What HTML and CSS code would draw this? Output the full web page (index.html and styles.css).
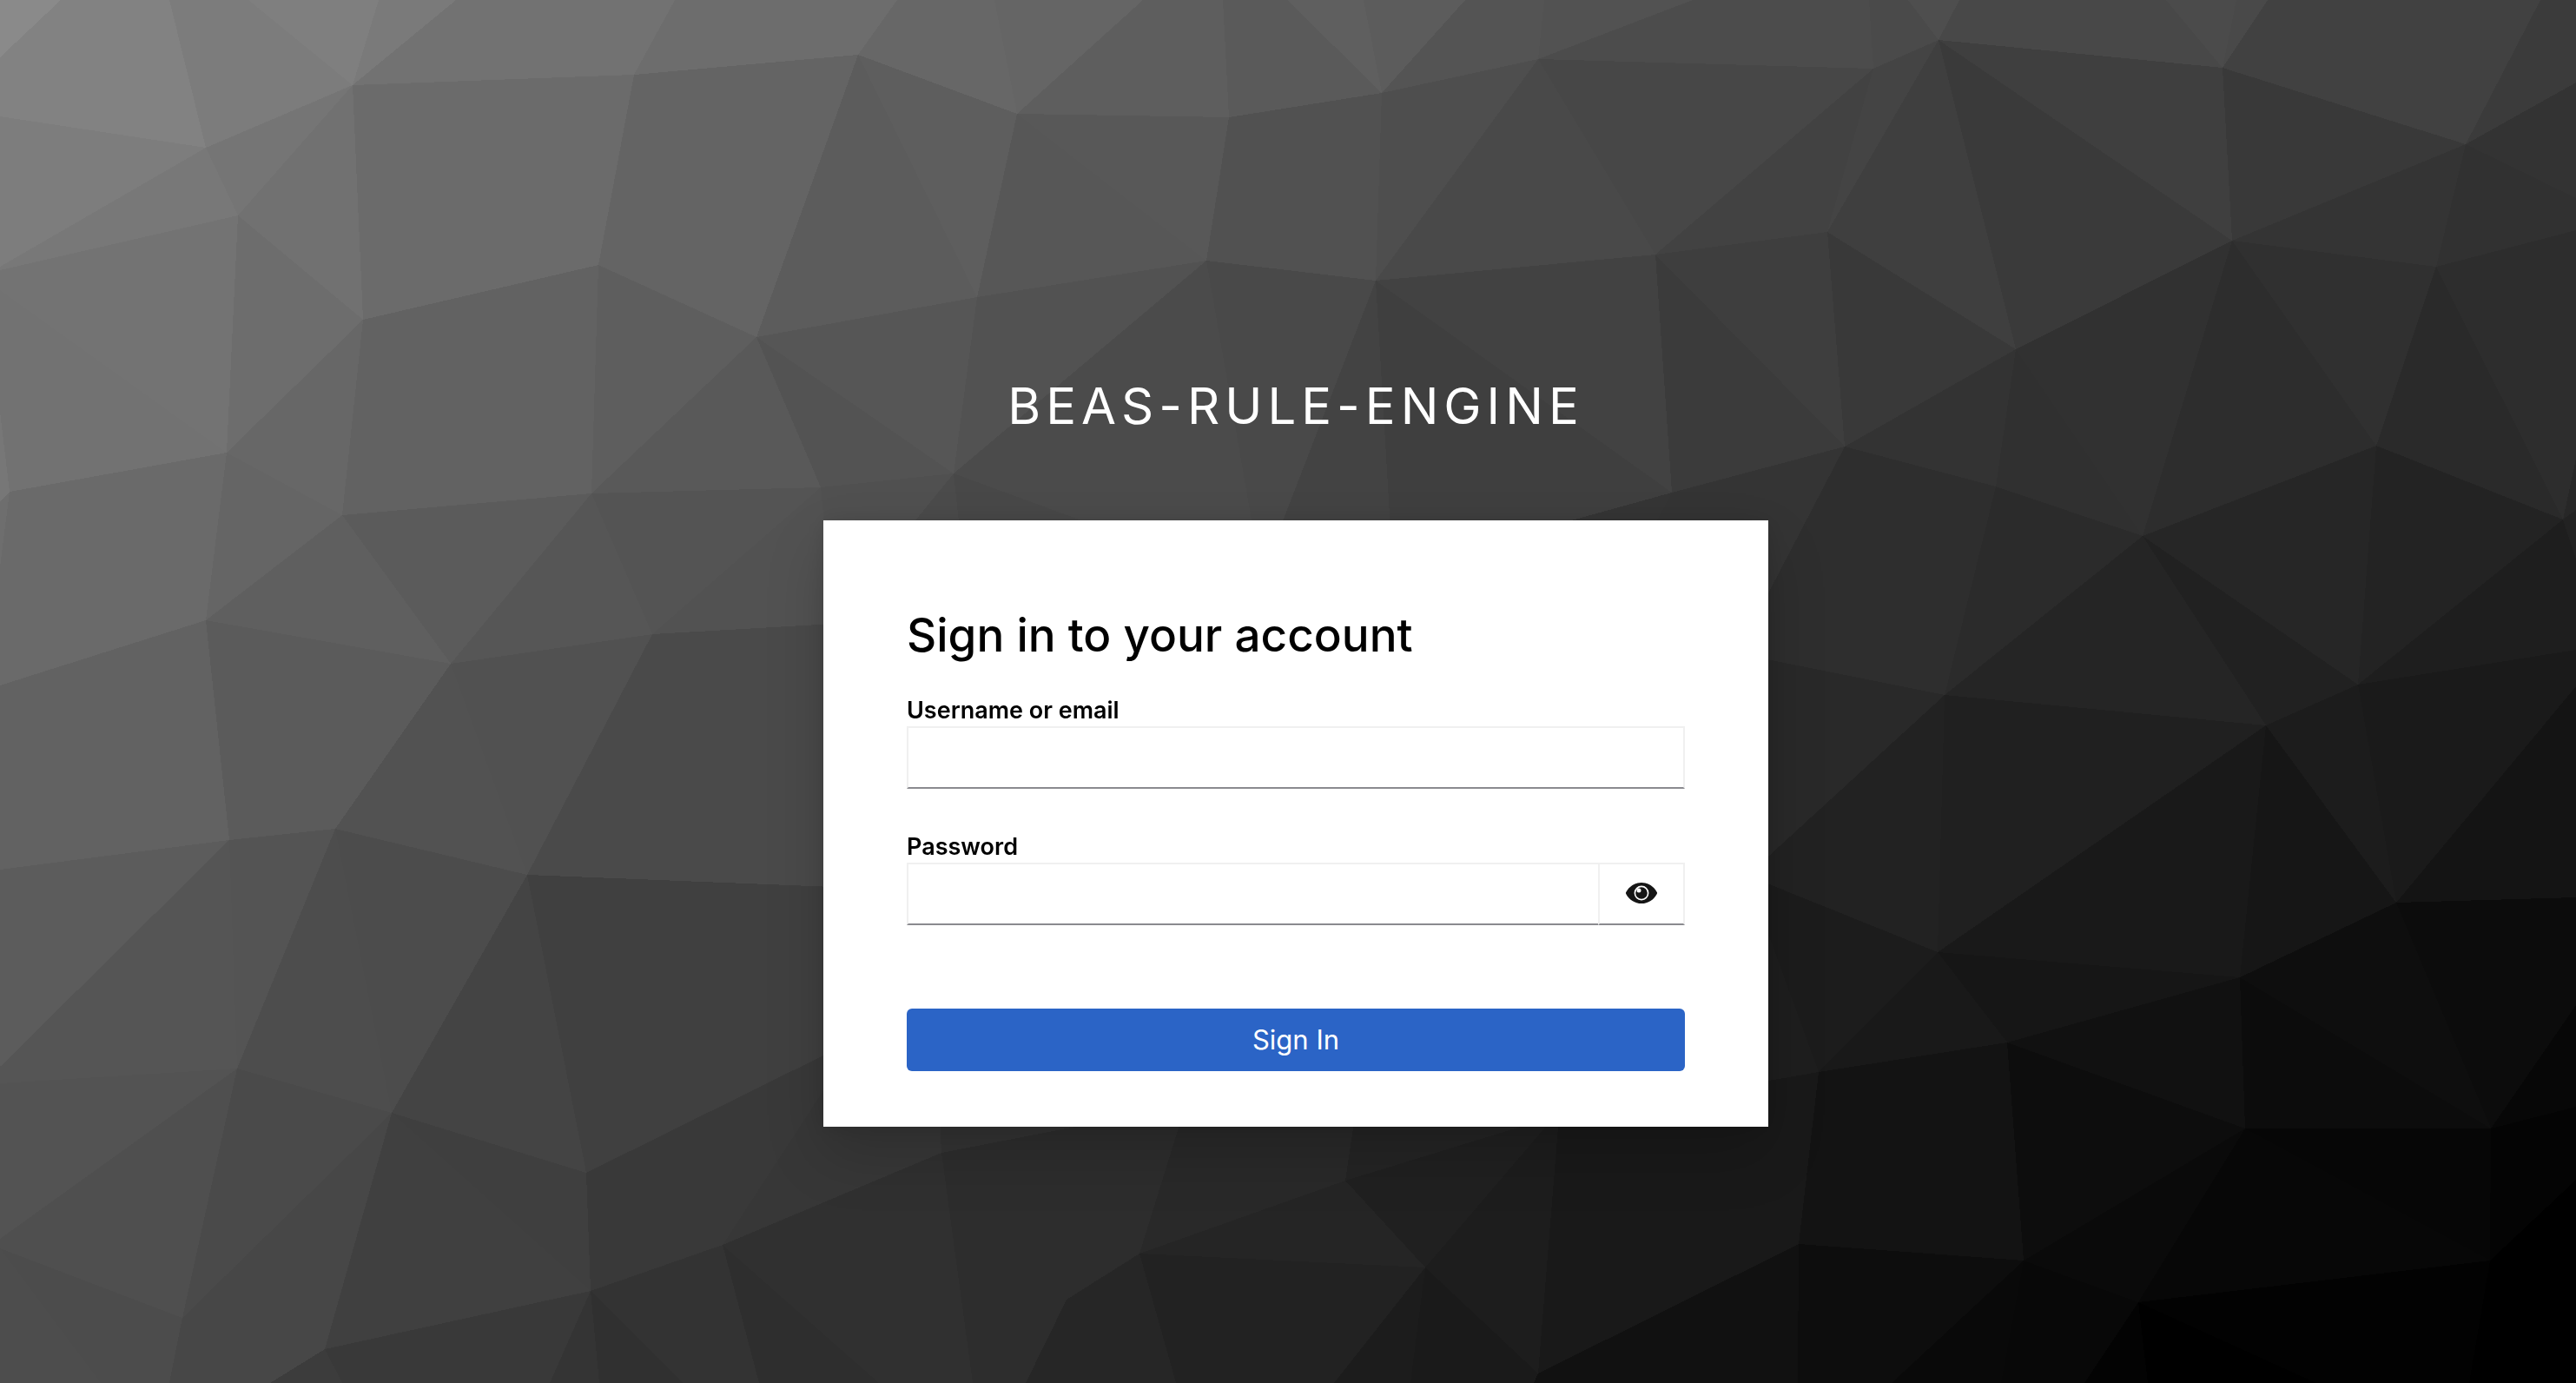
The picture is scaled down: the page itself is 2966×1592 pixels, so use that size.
FILE: index.html
```html
<!DOCTYPE html>
<html lang="en">
<head>
<meta charset="utf-8">
<meta name="viewport" content="width=device-width, initial-scale=1">
<title>Sign in to BEAS-RULE-ENGINE</title>
<link rel="stylesheet" href="styles.css">
</head>
<body>
<svg class="backdrop" viewBox="0 0 2966 1592" preserveAspectRatio="xMidYMid slice" shape-rendering="crispEdges" aria-hidden="true">
<!-- left side, upper part -->
<polygon fill="#8a8a8a" points="0,0 70,0 0,66"/>
<polygon fill="#828282" points="70,0 195,0 237,170 0,134 0,66"/>
<polygon fill="#7c7c7c" points="195,0 286,0 406,98 237,170"/>
<polygon fill="#7f7f7f" points="286,0 436,0 406,98"/>
<polygon fill="#7a7a7a" points="436,0 525,0 406,98"/>
<polygon fill="#727272" points="525,0 777,0 730,86 406,98"/>
<polygon fill="#6d6d6d" points="777,0 1033,0 988,63 730,86"/>
<polygon fill="#6b6b6b" points="406,98 730,86 689,305 418,368"/>
<polygon fill="#646464" points="730,86 988,63 871,388 689,305"/>
<polygon fill="#757575" points="237,170 406,98 274,248"/>
<polygon fill="#717171" points="406,98 274,248 418,368"/>
<polygon fill="#7d7d7d" points="0,134 237,170 0,307"/>
<polygon fill="#787878" points="0,307 237,170 274,248 0,311"/>
<polygon fill="#737373" points="0,311 274,248 261,521 0,334"/>
<polygon fill="#727272" points="0,334 261,521 11,566 0,474"/>
<polygon fill="#777777" points="0,474 11,566 0,577"/>
<polygon fill="#6e6e6e" points="0,577 11,566 0,653"/>
<polygon fill="#6d6d6d" points="274,248 418,368 261,521"/>
<polygon fill="#676767" points="418,368 261,521 394,593"/>
<polygon fill="#626262" points="418,368 689,305 681,568 394,593"/>
<polygon fill="#5e5e5e" points="689,305 871,388 681,568"/>
<polygon fill="#595959" points="871,388 681,568 945,561"/>
<polygon fill="#656565" points="261,521 394,593 237,714"/>
<polygon fill="#6a6a6a" points="11,566 261,521 237,714 0,789 0,653"/>
<polygon fill="#5f5f5f" points="394,593 237,714 519,764"/>
<polygon fill="#5b5b5b" points="394,593 681,568 519,764"/>
<polygon fill="#565656" points="681,568 519,764 751,730"/>
<polygon fill="#545454" points="681,568 945,561 751,730"/>
<polygon fill="#525252" points="945,561 751,730 960,718"/>
<!-- left side, lower part -->
<polygon fill="#626262" points="0,789 237,714 264,967 0,1001"/>
<polygon fill="#5b5b5b" points="237,714 519,764 386,954 264,967"/>
<polygon fill="#525252" points="519,764 386,954 607,1007"/>
<polygon fill="#515151" points="519,764 751,730 607,1007"/>
<polygon fill="#4a4a4a" points="751,730 960,718 960,1021 607,1007"/>
<polygon fill="#5c5c5c" points="0,1001 264,967 0,1228"/>
<polygon fill="#555555" points="264,967 273,1230 0,1247 0,1228"/>
<polygon fill="#545454" points="264,967 386,954 273,1230"/>
<polygon fill="#4d4d4d" points="386,954 273,1230 451,1281"/>
<polygon fill="#4c4c4c" points="386,954 607,1007 451,1281"/>
<polygon fill="#444444" points="607,1007 451,1281 675,1350"/>
<polygon fill="#404040" points="607,1007 960,1021 960,1209 675,1350"/>
<polygon fill="#535353" points="0,1247 273,1230 0,1426"/>
<polygon fill="#4f4f4f" points="0,1426 273,1230 210,1517 0,1437"/>
<polygon fill="#4a4a4a" points="273,1230 451,1281 210,1517"/>
<polygon fill="#474747" points="451,1281 210,1517 374,1553"/>
<polygon fill="#404040" points="451,1281 680,1486 374,1553"/>
<polygon fill="#3f3f3f" points="451,1281 675,1350 680,1486"/>
<polygon fill="#4c4c4c" points="0,1437 210,1517 195,1592 116,1592"/>
<polygon fill="#4d4d4d" points="0,1437 116,1592 0,1592"/>
<polygon fill="#474747" points="210,1517 374,1553 311,1592 195,1592"/>
<polygon fill="#3c3c3c" points="374,1553 311,1592 394,1592"/>
<polygon fill="#393939" points="374,1553 680,1486 633,1592 394,1592"/>
<polygon fill="#343434" points="680,1486 633,1592 690,1592"/>
<polygon fill="#303030" points="680,1486 690,1592 786,1592"/>
<polygon fill="#333333" points="680,1486 832,1433 874,1592 786,1592"/>
<polygon fill="#393939" points="675,1350 960,1209 960,1237 832,1433 680,1486"/>
<!-- top centre -->
<polygon fill="#676767" points="1033,0 1145,0 1171,131 988,63"/>
<polygon fill="#656565" points="1145,0 1316,0 1171,131"/>
<polygon fill="#5e5e5e" points="1316,0 1408,0 1415,135 1171,131"/>
<polygon fill="#5a5a5a" points="1408,0 1482,0 1591,107 1415,135"/>
<polygon fill="#5f5f5f" points="1482,0 1570,0 1591,107"/>
<polygon fill="#5c5c5c" points="1570,0 1687,0 1591,107"/>
<polygon fill="#545454" points="1687,0 1778,0 1771,68 1591,107"/>
<polygon fill="#525252" points="1778,0 1949,0 1771,68"/>
<polygon fill="#4c4c4c" points="1949,0 2152,0 2157,79 1771,68"/>
<polygon fill="#5e5e5e" points="988,63 1171,131 1125,342"/>
<polygon fill="#5c5c5c" points="988,63 1125,342 871,388"/>
<polygon fill="#575757" points="1171,131 1389,300 1125,342"/>
<polygon fill="#585858" points="1171,131 1415,135 1389,300"/>
<polygon fill="#515151" points="1415,135 1591,107 1584,323 1389,300"/>
<polygon fill="#4e4e4e" points="1591,107 1771,68 1584,323"/>
<polygon fill="#494949" points="1771,68 1906,293 1584,323"/>
<polygon fill="#474747" points="1771,68 2157,79 1906,293"/>
<polygon fill="#565656" points="871,388 1125,342 1098,545"/>
<polygon fill="#535353" points="871,388 1098,545 945,561"/>
<polygon fill="#525252" points="1125,342 1389,300 1098,545"/>
<polygon fill="#4b4b4b" points="1389,300 1098,545 1265,610 1443,610"/>
<polygon fill="#494949" points="1389,300 1584,323 1473,610 1443,610"/>
<polygon fill="#434343" points="1584,323 1601,610 1473,610"/>
<polygon fill="#3f3f3f" points="1584,323 1925,567 1791,610 1601,610"/>
<polygon fill="#424242" points="1584,323 1906,293 1925,567"/>
<polygon fill="#3b3b3b" points="1906,293 2124,514 1925,567"/>
<polygon fill="#3e3e3e" points="1906,293 2104,267 2124,514"/>
<polygon fill="#484848" points="1098,545 1105,610 1275,610"/>
<polygon fill="#4b4b4b" points="1098,545 1045,610 1105,610"/>
<polygon fill="#505050" points="945,561 1098,545 1045,610 960,718"/>
<polygon fill="#353535" points="1925,567 1770,610 1902,610"/>
<polygon fill="#343434" points="1925,567 2124,514 2030,696 1902,610"/>
<!-- right side, upper part -->
<polygon fill="#4a4a4a" points="2152,0 2197,0 2232,46 2157,79"/>
<polygon fill="#4e4e4e" points="2197,0 2256,0 2232,46"/>
<polygon fill="#484848" points="2256,0 2494,0 2559,78 2232,46"/>
<polygon fill="#4b4b4b" points="2494,0 2575,0 2559,78"/>
<polygon fill="#494949" points="2575,0 2611,0 2559,78"/>
<polygon fill="#414141" points="2611,0 2925,0 2839,166 2559,78"/>
<polygon fill="#3b3b3b" points="2925,0 2966,0 2966,95 2839,166"/>
<polygon fill="#333333" points="2839,166 2966,95 2966,228"/>
<polygon fill="#313131" points="2839,166 2966,228 2966,265 2805,307"/>
<polygon fill="#343434" points="2839,166 2570,277 2805,307"/>
<polygon fill="#393939" points="2559,78 2839,166 2570,277"/>
<polygon fill="#3f3f3f" points="2232,46 2559,78 2570,277"/>
<polygon fill="#3a3a3a" points="2232,46 2570,277 2321,402"/>
<polygon fill="#3f3f3f" points="2232,46 2104,267 2321,402"/>
<polygon fill="#444444" points="2157,79 2232,46 2104,267"/>
<polygon fill="#424242" points="2157,79 2104,267 1906,293"/>
<polygon fill="#393939" points="2104,267 2321,402 2124,514"/>
<polygon fill="#333333" points="2321,402 2298,560 2124,514"/>
<polygon fill="#303030" points="2321,402 2467,617 2298,560"/>
<polygon fill="#313131" points="2321,402 2570,277 2467,617"/>
<polygon fill="#2d2d2d" points="2570,277 2736,513 2467,617"/>
<polygon fill="#303030" points="2570,277 2805,307 2736,513"/>
<polygon fill="#2a2a2a" points="2805,307 2951,598 2736,513"/>
<polygon fill="#2d2d2d" points="2805,307 2966,265 2966,528 2951,598"/>
<polygon fill="#2e2e2e" points="2124,514 2298,560 2239,800 2025,757 2025,704"/>
<polygon fill="#2b2b2b" points="2298,560 2467,617 2239,800"/>
<polygon fill="#252525" points="2467,617 2609,835 2239,800"/>
<polygon fill="#212121" points="2467,617 2715,788 2609,835"/>
<polygon fill="#262626" points="2467,617 2736,513 2715,788"/>
<polygon fill="#232323" points="2736,513 2951,598 2715,788"/>
<polygon fill="#272727" points="2951,598 2966,528 2966,587"/>
<polygon fill="#222222" points="2951,598 2966,587 2966,643"/>
<polygon fill="#1e1e1e" points="2951,598 2966,643 2966,748 2715,788"/>
<!-- right side, lower part -->
<polygon fill="#1a1a1a" points="2715,788 2966,748 2966,790 2759,1039"/>
<polygon fill="#1c1c1c" points="2715,788 2609,835 2759,1039"/>
<polygon fill="#141414" points="2759,1039 2966,790 2966,1033"/>
<polygon fill="#292929" points="2239,800 2025,757 2025,996"/>
<polygon fill="#222222" points="2239,800 2025,996 2025,1013 2231,1096"/>
<polygon fill="#202020" points="2239,800 2609,835 2231,1096"/>
<polygon fill="#191919" points="2609,835 2231,1096 2579,1125"/>
<polygon fill="#161616" points="2609,835 2579,1125 2759,1039"/>
<polygon fill="#0e0e0e" points="2759,1039 2579,1125 2868,1299"/>
<polygon fill="#0c0c0c" points="2759,1039 2966,1033 2966,1157 2868,1299"/>
<polygon fill="#070707" points="2868,1299 2966,1157 2966,1274"/>
<polygon fill="#040404" points="2868,1299 2966,1274 2966,1358 2867,1451"/>
<polygon fill="#1c1c1c" points="2231,1096 2025,1013 2025,1045 2094,1234"/>
<polygon fill="#191919" points="2231,1096 2311,1200 2094,1234"/>
<polygon fill="#161616" points="2231,1096 2579,1125 2311,1200"/>
<polygon fill="#111111" points="2579,1125 2585,1299 2311,1200"/>
<polygon fill="#0c0c0c" points="2579,1125 2868,1299 2585,1299"/>
<polygon fill="#0d0d0d" points="2311,1200 2585,1299 2330,1451"/>
<polygon fill="#131313" points="2311,1200 2094,1234 2071,1432 2330,1451"/>
<polygon fill="#1e1e1e" points="2094,1234 2025,1045 2025,1246"/>
<polygon fill="#191919" points="2094,1234 2025,1246 1794,1285 1771,1581 2071,1432"/>
<polygon fill="#111111" points="2071,1432 1771,1581 1766,1592 2070,1592"/>
<polygon fill="#0d0d0d" points="2071,1432 2330,1451 2178,1592 2070,1592"/>
<polygon fill="#090909" points="2330,1451 2178,1592 2304,1592"/>
<polygon fill="#080808" points="2330,1451 2304,1592 2400,1592 2462,1499"/>
<polygon fill="#0a0a0a" points="2330,1451 2585,1299 2462,1499"/>
<polygon fill="#070707" points="2585,1299 2867,1451 2462,1499"/>
<polygon fill="#060606" points="2585,1299 2868,1299 2867,1451"/>
<polygon fill="#030303" points="2462,1499 2400,1592 2473,1592"/>
<polygon fill="#000000" points="2462,1499 2473,1592 2667,1592"/>
<polygon fill="#020202" points="2462,1499 2867,1451 2843,1592 2667,1592"/>
<!-- bottom centre -->
<polygon fill="#373737" points="960,1237 1082,1285 1084,1327 832,1433"/>
<polygon fill="#303030" points="832,1433 1084,1327 1120,1592 1012,1592"/>
<polygon fill="#2e2e2e" points="832,1433 1012,1592 874,1592"/>
<polygon fill="#333333" points="1084,1327 1082,1285 1300,1285"/>
<polygon fill="#2d2d2d" points="1084,1327 1300,1285 1361,1285 1312,1443 1228,1496 1181,1592 1120,1592"/>
<polygon fill="#262626" points="1228,1496 1312,1443 1354,1592 1181,1592"/>
<polygon fill="#292929" points="1312,1443 1361,1285 1560,1285 1549,1359"/>
<polygon fill="#252525" points="1312,1443 1549,1359 1641,1459"/>
<polygon fill="#222222" points="1312,1443 1641,1459 1536,1592 1354,1592"/>
<polygon fill="#242424" points="1549,1359 1560,1285 1790,1285"/>
<polygon fill="#202020" points="1549,1359 1790,1285 1641,1459"/>
<polygon fill="#1d1d1d" points="1641,1459 1790,1285 1795,1285 1771,1581"/>
<polygon fill="#1c1c1c" points="1641,1459 1536,1592 1624,1592"/>
<polygon fill="#1a1a1a" points="1641,1459 1624,1592 1766,1592 1771,1581"/>
</svg>
<div class="login">
  <header class="login-header">BEAS-RULE-ENGINE</header>
  <main class="card">
    <h1 class="card-title">Sign in to your account</h1>
    <form class="form">
      <div class="field">
        <label class="label" for="username">Username or email</label>
        <input class="input" id="username" name="username" type="text" autocomplete="username">
      </div>
      <div class="field">
        <label class="label" for="password">Password</label>
        <div class="input-group">
          <input class="input" id="password" name="password" type="password" autocomplete="current-password">
          <button class="toggle" type="button" aria-label="Show password">
            <svg class="eye" viewBox="0 64 576 384" aria-hidden="true">
              <path fill="currentColor" d="M572.52 241.4C518.29 135.59 410.93 64 288 64S57.68 135.64 3.48 241.41a32.35 32.35 0 0 0 0 29.19C57.71 376.41 165.07 448 288 448s230.32-71.64 284.52-177.41a32.35 32.35 0 0 0 0-29.19z"/>
              <circle cx="288" cy="256" r="122" fill="none" stroke="#fff" stroke-width="26"/>
              <circle cx="240" cy="208" r="40" fill="#fff"/>
            </svg>
          </button>
        </div>
      </div>
      <button class="submit" type="submit">Sign In</button>
    </form>
  </main>
</div>
</body>
</html>
```
FILE: styles.css
```css
* {
  box-sizing: border-box;
}

body {
  margin: 0;
  background: #000;
  color: #000;
  font-family: Inter, "Liberation Sans", sans-serif;
}

.backdrop {
  position: fixed;
  inset: 0;
  z-index: -1;
  width: 100%;
  height: 100%;
}

.login {
  display: flex;
  flex-direction: column;
  align-items: center;
  justify-content: center;
  min-height: 100vh;
  padding-left: 18px;
}

.login-header {
  padding: 132px 0 92px;
  color: #fff;
  font-size: 58px;
  line-height: 80px;
  letter-spacing: 6px;
  text-transform: uppercase;
}

.card {
  width: 100%;
  max-width: 1088px;
  padding: 96px 96px 64px;
  background: #fff;
  box-shadow: 0 32px 64px rgba(3, 3, 3, 0.16), 0 0 24px rgba(3, 3, 3, 0.1);
}

.card-title {
  margin: 0 0 33px;
  font-size: 53px;
  font-weight: 500;
  line-height: 72px;
}

.form {
  display: flex;
  flex-direction: column;
}

.field {
  display: flex;
  flex-direction: column;
  margin-bottom: 49px;
}

.label {
  align-self: flex-start;
  font-size: 27px;
  font-weight: 600;
  line-height: 36px;
}

.input,
.toggle {
  height: 72px;
  border: 2px solid #f0f0f0;
  border-bottom-color: #8a8a8f;
  border-radius: 0;
  background: #fff;
  color: #151515;
  font: inherit;
  font-size: 32px;
}

.input {
  width: 100%;
  min-width: 0;
  padding: 0 16px;
}

.input-group {
  display: flex;
}

.input-group .input {
  flex: 1;
  border-right: 0;
}

.toggle {
  display: flex;
  flex: 0 0 100px;
  align-items: center;
  justify-content: center;
  padding: 0 0 2px;
}

.eye {
  width: 36px;
  height: 24px;
}

.submit {
  height: 72px;
  margin-top: 47px;
  padding: 0 0 2px;
  border: 0;
  border-radius: 6px;
  background: #2b64c6;
  color: #fff;
  font: inherit;
  font-size: 31px;
}
```
